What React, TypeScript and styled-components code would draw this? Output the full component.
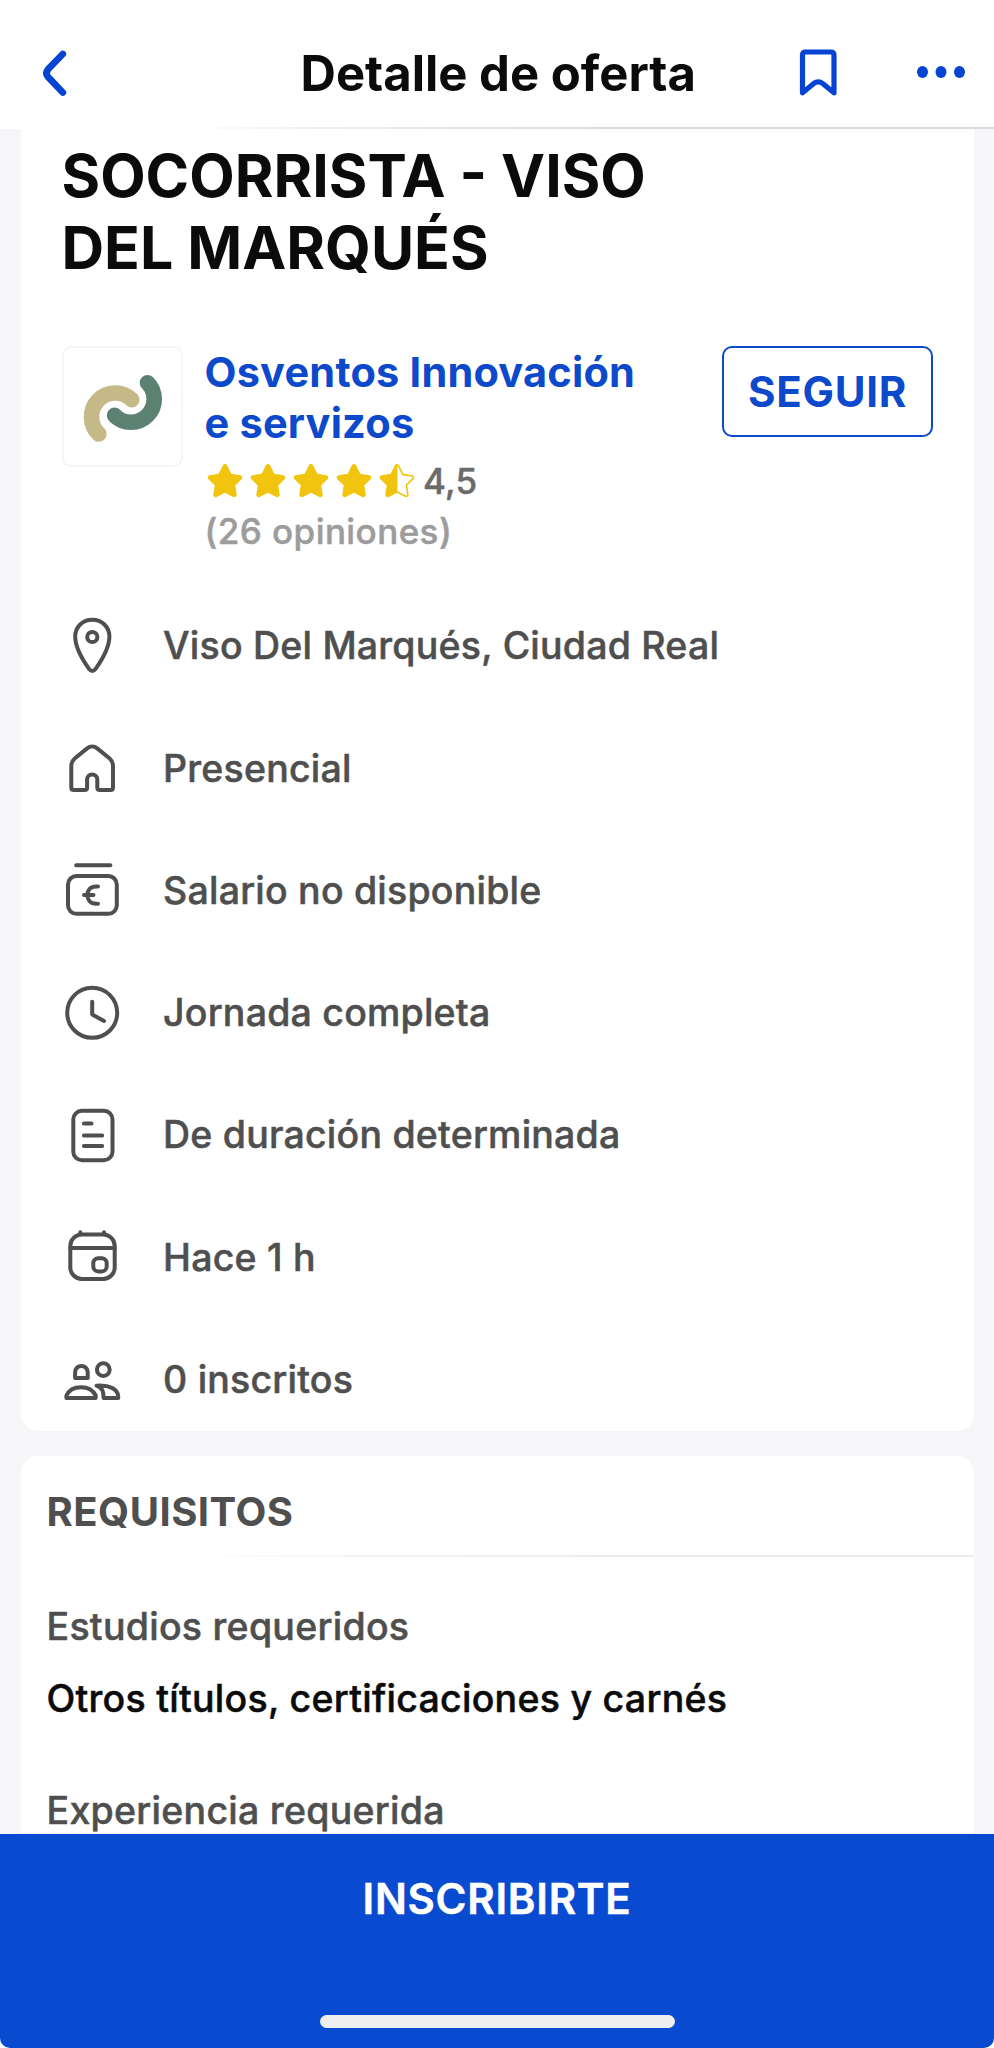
import React from "react";
import styled, { createGlobalStyle } from "styled-components";

const colors = {
  blue: "#0d4acb",
  headerBlue: "#0543d3",
  footerBlue: "#094bd0",
  ink: "#0b0b0c",
  gray: "#4f4f4f",
  canvas: "#f6f6f9",
  star: "#f1c40f",
};

const GlobalStyle = createGlobalStyle`
  * { box-sizing: border-box; }
  html, body { margin: 0; background: #fff; }
  body { font-family: Inter, "Liberation Sans", sans-serif; }
  h1, h2, p, ul, dl, dt, dd { margin: 0; padding: 0; font-weight: inherit; }
  button { font: inherit; border: 0; background: none; padding: 0; cursor: pointer; }
  svg { display: block; flex: none; overflow: visible; }
`;

const Screen = styled.div`
  display: flex;
  flex-direction: column;
  width: 994px;
  height: 2048px;
  overflow: hidden;
  background: ${colors.canvas};
  border-radius: 0 0 10px 10px;
`;

const Header = styled.header`
  flex: none;
  display: grid;
  grid-template-columns: 1fr auto 1fr;
  align-items: center;
  height: 129px;
  padding: 19px 27px 0 40px;
  background: #fff;
  border-bottom: 2px solid;
  border-image: linear-gradient(90deg, #fff 18%, #ececed 36%, #dcdce0 60%, #dcdce0) 1;
`;

const HeaderTitle = styled.h1`
  margin-right: 10.5px;
  padding-top: 1px;
  font-size: 49px;
  font-weight: 700;
  line-height: 60px;
  color: ${colors.ink};
`;

const HeaderActions = styled.div`
  display: flex;
  justify-content: flex-end;
  gap: 77px;
`;

const Content = styled.main`
  flex: 1;
  min-height: 0;
  overflow: hidden;
  display: flex;
  flex-direction: column;
  gap: 25.3px;
  padding: 0 20.5px;
`;

const Card = styled.section`
  flex: none;
  background: #fff;
`;

const OfferCard = styled(Card)`
  padding: 10.5px 40.5px 21px 41px;
  border-radius: 0 0 17px 17px;
`;

const RequirementsCard = styled(Card)`
  padding-top: 32px;
  border-radius: 17px 17px 0 0;
`;

const OfferTitle = styled.h2`
  width: 700px;
  font-size: 59px;
  font-weight: 700;
  line-height: 72px;
  color: ${colors.ink};
`;

const CompanyRow = styled.div`
  display: flex;
  align-items: flex-start;
  margin-top: 62px;
`;

const LogoBox = styled.div`
  flex: none;
  width: 121.5px;
  height: 121.5px;
  border: 2px solid #f5f5f6;
  border-radius: 9px;
`;

const CompanyInfo = styled.div`
  flex: 1;
  padding: 1.4px 0 0 21.5px;
`;

const CompanyName = styled.p`
  font-size: 41.5px;
  font-weight: 700;
  line-height: 51px;
  letter-spacing: 0.2px;
  color: ${colors.blue};
`;

const Rating = styled.div`
  display: flex;
  align-items: center;
  gap: 7.2px;
  height: 51px;
  margin-top: 7px;
  padding-left: 2px;
`;

const RatingValue = styled.span`
  margin-left: 0.5px;
  font-size: 35px;
  font-weight: 500;
  line-height: 51px;
  letter-spacing: 0.3px;
  color: #6b6b6b;
  -webkit-text-stroke: 0.5px currentColor;
`;

const Reviews = styled.p`
  margin-top: -0.6px;
  font-size: 35px;
  font-weight: 500;
  line-height: 51px;
  letter-spacing: 0.42px;
  color: #9c9c9c;
  -webkit-text-stroke: 0.5px currentColor;
`;

const FollowButton = styled.button`
  && {
    width: 211px;
    height: 91.5px;
    padding-top: 1px;
    border: 2.5px solid ${colors.blue};
    border-radius: 10px;
    font-size: 42px;
    font-weight: 700;
    letter-spacing: 0.7px;
    color: ${colors.blue};
  }
`;

const FactList = styled.ul`
  display: flex;
  flex-direction: column;
  gap: 62.3px;
  margin-top: 58.5px;
  list-style: none;
`;

const Fact = styled.li`
  display: flex;
  align-items: center;
  gap: 41.5px;
  height: 60px;
  font-size: 37.5px;
  font-weight: 500;
  line-height: 60px;
  letter-spacing: 0.22px;
  color: ${colors.gray};
  -webkit-text-stroke: 0.5px currentColor;
`;

const FactLabel = styled.span`
  padding-top: 0.8px;
`;

const SectionTitle = styled.h2`
  padding: 0 26px 19.5px;
  font-size: 40px;
  font-weight: 700;
  line-height: 48px;
  letter-spacing: 0.5px;
  color: ${colors.gray};
`;

const Divider = styled.div`
  height: 2px;
  background: linear-gradient(90deg, #fff 18%, #f3f3f4 36%, #ededef 60%);
`;

const Requirements = styled.dl`
  padding: 46px 26px 0;
  font-size: 37.5px;
  font-weight: 500;
  line-height: 48px;
  letter-spacing: 0.27px;
  -webkit-text-stroke: 0.5px currentColor;
`;

const Term = styled.dt`
  color: ${colors.gray};
`;

const Description = styled.dd`
  && {
    margin: 24px 0 63.5px;
  }
  color: ${colors.ink};
`;

const Footer = styled.footer`
  flex: none;
  display: flex;
  flex-direction: column;
  align-items: center;
  justify-content: space-between;
  height: 214px;
  padding: 38.5px 0 20.5px;
  background: ${colors.footerBlue};
`;

const ApplyButton = styled.button`
  && {
    font-size: 42px;
    font-weight: 600;
    line-height: 52px;
    letter-spacing: 0.75px;
    color: #fff;
    -webkit-text-stroke: 0.5px currentColor;
  }
`;

const HomeIndicator = styled.div`
  width: 355px;
  height: 12.5px;
  border-radius: 7px;
  background: #eee;
`;

const FactSvg = styled.svg.attrs({ width: 60, height: 60, viewBox: "0 0 60 60" })`
  fill: none;
  stroke: ${colors.gray};
  stroke-width: 4;
  stroke-linecap: round;
  stroke-linejoin: round;
`;

const PinIcon = () => (
  <FactSvg>
    <path d="M30.3 3.7C39.8 3.7 47.4 10.8 47.4 20.5C47.4 31 39.5 44.5 33.8 52.6Q30.3 57.4 26.8 52.6C21.1 44.5 13.2 31 13.2 20.5C13.2 10.8 20.8 3.7 30.3 3.7Z" />
    <circle cx="30.3" cy="21" r="5.1" />
  </FactSvg>
);

const HomeIcon = () => (
  <FactSvg>
    <path d="M24.8 10.6C28.8 7.6 31.6 7.6 35.6 10.6L47.4 20.2Q51 23.4 51 28V49.5Q51 52 48.5 52H37.8Q35.3 52 35.3 49.5V41.5A5.1 5.1 0 0 0 25.1 41.5V49.5Q25.1 52 22.6 52H11.8Q9.3 52 9.3 49.5V28Q9.3 23.4 13 20.2Z" />
  </FactSvg>
);

const SalaryIcon = () => (
  <FactSvg>
    <path d="M14.2 5.3H48.3" />
    <rect x="6" y="16" width="48.8" height="37.8" rx="8.5" />
    <path d="M36 26.4H34C28.4 26.4 25.4 30.2 25.4 35S28.4 43.7 34 43.7H36M22 35H31.5" />
  </FactSvg>
);

const ClockIcon = () => (
  <FactSvg>
    <circle cx="30.2" cy="29.8" r="25" />
    <path d="M30.2 18.7V31.4L42 38" />
  </FactSvg>
);

const ContractIcon = () => (
  <FactSvg>
    <rect x="11.3" y="5.8" width="39.2" height="49.4" rx="8.5" />
    <path d="M21.9 18.5H29.5M21.9 30.4H40.2M21.9 41.1H40.2" />
  </FactSvg>
);

const CalendarIcon = () => (
  <FactSvg>
    <rect x="8.3" y="7.5" width="44.4" height="44.4" rx="11.5" />
    <path d="M8.3 20.9H52.7M18.3 7V5.2M42 7V5.2" />
    <rect x="31.3" y="31.2" width="13.4" height="13.2" rx="5" />
  </FactSvg>
);

const PeopleIcon = () => (
  <FactSvg>
    <path d="M13.1 27.9V22.2A6.3 6.3 0 0 1 25.7 22.2V27.9Z" />
    <circle cx="41.3" cy="19.6" r="6.4" />
    <path d="M4.4 48V45.5C7 40 12.5 37.2 19 37.2S31 40 33.7 45.5V48Z" />
    <path d="M34.5 35.7C47 34.7 56 39 56.2 46.5V48H41.6C41.6 42 40.8 37.8 34.5 35.7Z" />
  </FactSvg>
);

const facts = [
  { icon: PinIcon, label: "Viso Del Marqués, Ciudad Real" },
  { icon: HomeIcon, label: "Presencial" },
  { icon: SalaryIcon, label: "Salario no disponible" },
  { icon: ClockIcon, label: "Jornada completa" },
  { icon: ContractIcon, label: "De duración determinada" },
  { icon: CalendarIcon, label: "Hace 1 h" },
  { icon: PeopleIcon, label: "0 inscritos" },
];

const starPath =
  "M17.5 3.3L22.2 12.6L32 14.1L25.1 21L26.6 30.9L17.5 26.4L8.4 30.9L9.9 21L3 14.1L12.8 12.6Z";

const Star = ({ half = false }: { half?: boolean }) => (
  <svg width="36" height="36" viewBox="0 0 35 35">
    <path d={starPath} fill={colors.star} stroke={colors.star} strokeWidth="4.6" strokeLinejoin="round" />
    {half && (
      <>
        <clipPath id="half-star">
          <rect x="18" y="0" width="18" height="35" />
        </clipPath>
        <g clipPath="url(#half-star)">
          <path d={starPath} fill="#fff" stroke="#fff" strokeWidth="1.4" strokeLinejoin="round" />
        </g>
      </>
    )}
  </svg>
);

const CompanyLogo = () => (
  <svg width="117.5" height="117.5" viewBox="2 2 117.5 117.5" fill="none" strokeWidth="15.6" strokeLinecap="round">
    <path d="M36.8 88A23 23 0 0 1 69.8 53.6" stroke="#c4b987" />
    <path d="M52.6 69.4A23 23 0 0 0 85.5 36.7" stroke="#5b8172" />
  </svg>
);

export default function App() {
  return (
    <>
      <GlobalStyle />
      <Screen>
        <Header>
          <svg width="30" height="48" viewBox="40 49 30 48" fill="none" stroke={colors.headerBlue} strokeWidth="6.8" strokeLinecap="round" strokeLinejoin="round">
            <path d="M62.8 54L48.2 69.2Q44.6 73.2 48.2 77.2L62.8 92.5" />
          </svg>
          <HeaderTitle>Detalle de oferta</HeaderTitle>
          <HeaderActions>
            <svg width="38" height="48" viewBox="800 48.5 38 48" fill="none" stroke={colors.headerBlue} strokeWidth="5.2" strokeLinejoin="round">
              <path d="M805.5 51.5H831Q834 51.5 834 54.5V92.3L823 83.2Q818.3 79.6 813.5 83.2L802.5 92.3V54.5Q802.5 51.5 805.5 51.5Z" />
            </svg>
            <svg width="52" height="48" viewBox="914.5 49.5 52 48" fill={colors.headerBlue}>
              <ellipse cx="922" cy="72.5" rx="5.5" ry="6" />
              <ellipse cx="940.5" cy="72.5" rx="5.5" ry="6" />
              <ellipse cx="959" cy="72.5" rx="5.5" ry="6" />
            </svg>
          </HeaderActions>
        </Header>

        <Content>
          <OfferCard>
            <OfferTitle>
              SOCORRISTA - VISO
              <br />
              DEL MARQUÉS
            </OfferTitle>
            <CompanyRow>
              <LogoBox>
                <CompanyLogo />
              </LogoBox>
              <CompanyInfo>
                <CompanyName>
                  Osventos Innovación
                  <br />e servizos
                </CompanyName>
                <Rating>
                  <Star />
                  <Star />
                  <Star />
                  <Star />
                  <Star half />
                  <RatingValue>4,5</RatingValue>
                </Rating>
                <Reviews>(26 opiniones)</Reviews>
              </CompanyInfo>
              <FollowButton>SEGUIR</FollowButton>
            </CompanyRow>
            <FactList>
              {facts.map(({ icon: Icon, label }) => (
                <Fact key={label}>
                  <Icon />
                  <FactLabel>{label}</FactLabel>
                </Fact>
              ))}
            </FactList>
          </OfferCard>

          <RequirementsCard>
            <SectionTitle>REQUISITOS</SectionTitle>
            <Divider />
            <Requirements>
              <Term>Estudios requeridos</Term>
              <Description>Otros títulos, certificaciones y carnés</Description>
              <Term>Experiencia requerida</Term>
            </Requirements>
          </RequirementsCard>
        </Content>

        <Footer>
          <ApplyButton>INSCRIBIRTE</ApplyButton>
          <HomeIndicator />
        </Footer>
      </Screen>
    </>
  );
}
